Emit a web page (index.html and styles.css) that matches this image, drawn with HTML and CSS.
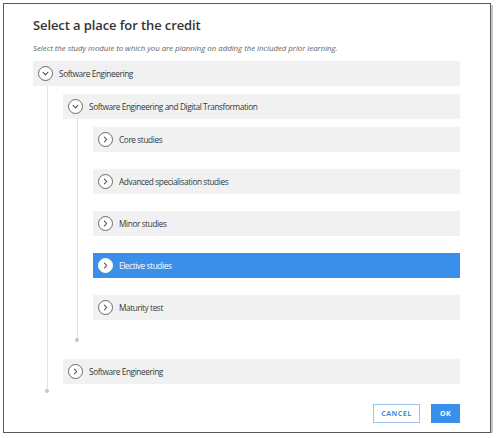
FILE: index.html
```html
<!DOCTYPE html>
<html lang="en">
<head>
<meta charset="utf-8">
<title>Select a place for the credit</title>
<link rel="stylesheet" href="styles.css">
</head>
<body>
<div class="dialog">
  <h1 class="title">Select a place for the credit</h1>
  <p class="subtitle">Select the study module to which you are planning on adding the included prior learning.</p>

  <div class="tree">
    <div class="row">
      <span class="toggle"><svg viewBox="0 0 14 14"><path d="M4.4 5.8 L7 8.4 L9.6 5.8"/></svg></span>
      <span class="label">Software Engineering</span>
    </div>
    <div class="children">
      <div class="row">
        <span class="toggle"><svg viewBox="0 0 14 14"><path d="M4.4 5.8 L7 8.4 L9.6 5.8"/></svg></span>
        <span class="label">Software Engineering and Digital Transformation</span>
      </div>
      <div class="children inner">
        <div class="row">
          <span class="toggle"><svg viewBox="0 0 14 14"><path d="M5.8 4.4 L8.4 7 L5.8 9.6"/></svg></span>
          <span class="label">Core studies</span>
        </div>
        <div class="row">
          <span class="toggle"><svg viewBox="0 0 14 14"><path d="M5.8 4.4 L8.4 7 L5.8 9.6"/></svg></span>
          <span class="label">Advanced specialisation studies</span>
        </div>
        <div class="row">
          <span class="toggle"><svg viewBox="0 0 14 14"><path d="M5.8 4.4 L8.4 7 L5.8 9.6"/></svg></span>
          <span class="label">Minor studies</span>
        </div>
        <div class="row selected">
          <span class="toggle"><svg viewBox="0 0 14 14"><path d="M5.8 4.4 L8.4 7 L5.8 9.6"/></svg></span>
          <span class="label">Elective studies</span>
        </div>
        <div class="row">
          <span class="toggle"><svg viewBox="0 0 14 14"><path d="M5.8 4.4 L8.4 7 L5.8 9.6"/></svg></span>
          <span class="label">Maturity test</span>
        </div>
      </div>
      <div class="row">
        <span class="toggle"><svg viewBox="0 0 14 14"><path d="M5.8 4.4 L8.4 7 L5.8 9.6"/></svg></span>
        <span class="label">Software Engineering</span>
      </div>
    </div>
  </div>

  <div class="footer">
    <button class="btn btn-cancel" type="button">CANCEL</button>
    <button class="btn btn-ok" type="button">OK</button>
  </div>
</div>
</body>
</html>
```
FILE: styles.css
```css
* { box-sizing: border-box; }

html, body {
  margin: 0;
  padding: 0;
  background: #ffffff;
}

body {
  padding: 3px 0 0 3px;
  font-family: "Open Sans", "Noto Sans", sans-serif;
  color: #3c3c3c;
}

.dialog {
  width: 488px;
  border: 1px solid #5a5a5a;
  box-shadow: 2px 2px 0 #c8c8c8;
  padding: 13px 30px 9px 29px;
  background: #fff;
}

.title {
  margin: 0;
  font-size: 13px;
  line-height: 16px;
  font-weight: 600;
  color: #333;
  letter-spacing: -0.1px;
}

.subtitle {
  margin: 10px 0 0 0;
  font-size: 7.9px;
  line-height: 10px;
  font-style: italic;
  color: #666;
  letter-spacing: -0.05px;
}

.tree {
  margin-top: 8px;
}

.row {
  display: flex;
  align-items: center;
  height: 25px;
  padding-left: 5px;
  background: #f1f1f1;
}

.toggle {
  flex: none;
  width: 15px;
  height: 15px;
  border: 1px solid #6a6a6a;
  border-radius: 50%;
  background: #fff;
  display: flex;
  align-items: center;
  justify-content: center;
}

.toggle svg {
  width: 13px;
  height: 13px;
}

.toggle path {
  fill: none;
  stroke: #4a4a4a;
  stroke-width: 1.1;
  stroke-linecap: round;
  stroke-linejoin: round;
}

.label {
  margin-left: 6px;
  font-size: 8.3px;
  color: #383838;
  letter-spacing: -0.42px;
}

.row.selected {
  background: #3a8fea;
}

.row.selected .toggle {
  border-color: #fff;
}

.row.selected .label {
  color: #fff;
}

.children {
  position: relative;
  margin-left: 14px;
  border-left: 1px solid #e2e2e2;
  padding: 8px 0 7px 15px;
}

.children.inner {
  padding: 8px 0 20px 15px;
  margin-bottom: 19px;
}

.children.inner .row + .row {
  margin-top: 17px;
}

.children::after {
  content: "";
  position: absolute;
  left: -3px;
  bottom: -2px;
  width: 4px;
  height: 4px;
  border-radius: 50%;
  background: #c4c4c4;
}

.footer {
  display: flex;
  justify-content: flex-end;
  gap: 11px;
  margin-top: 13px;
}

.btn {
  height: 19px;
  padding: 0;
  font-family: "Open Sans", "Noto Sans", sans-serif;
  font-size: 7px;
  font-weight: 700;
  letter-spacing: 0.5px;
  border-radius: 0;
  cursor: pointer;
}

.btn-cancel {
  width: 47px;
  background: #fff;
  color: #3a8fea;
  border: 1px solid #9cc3ee;
}

.btn-ok {
  width: 29px;
  background: #3a8fea;
  color: #fff;
  border: 1px solid #3a8fea;
}
```
